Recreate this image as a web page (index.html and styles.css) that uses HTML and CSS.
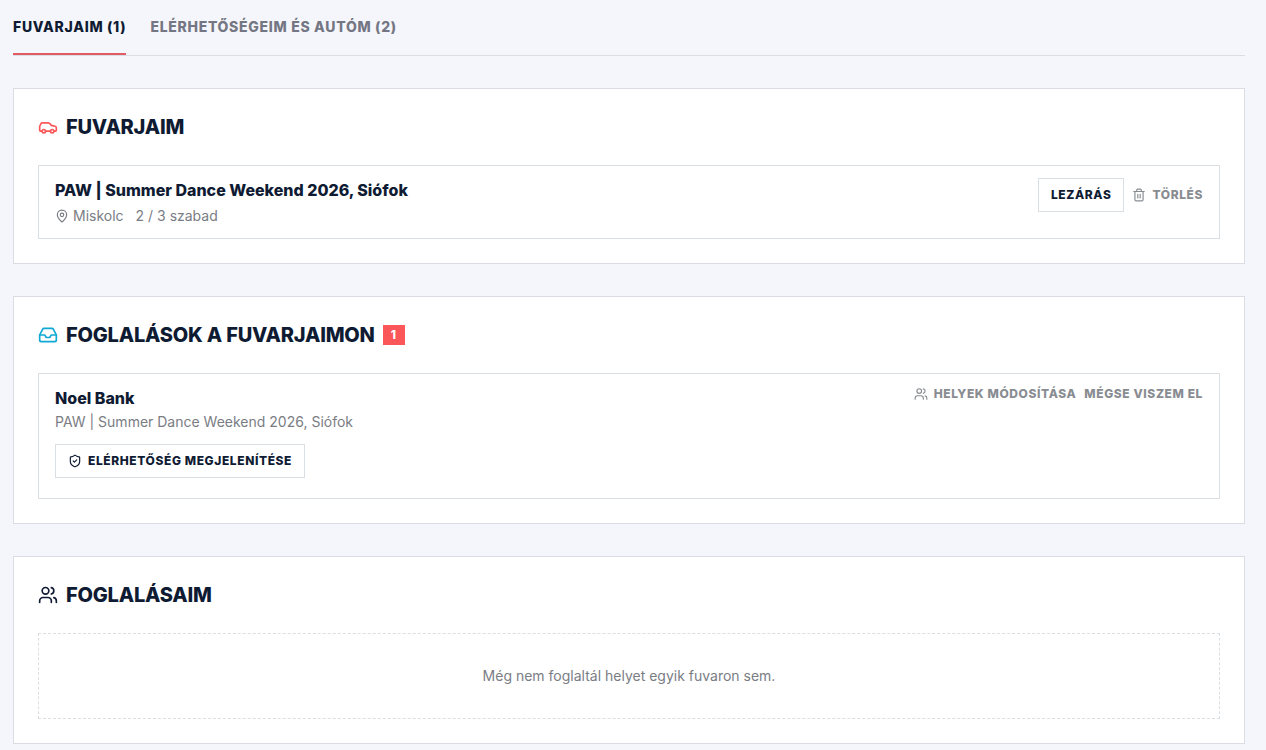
FILE: index.html
```html
<!DOCTYPE html>
<html lang="hu">

<head>
  <meta charset="UTF-8">
  <meta name="viewport" content="width=device-width, initial-scale=1.0">
  <title>Fuvarjaim</title>
  <link rel="stylesheet" href="styles.css">
</head>

<body>
  <nav class="tabs">
    <a href="#fuvarjaim" class="tab active">Fuvarjaim (1)</a>
    <a href="#elerhetosegeim" class="tab">Elérhetőségeim és autóm (2)</a>
  </nav>

  <main class="sections">
    <section class="card" id="fuvarjaim">
      <h2>
        <svg class="icon icon-red" viewBox="0 0 24 24"><path d="M19 17h2c.6 0 1-.4 1-1v-3c0-.9-.7-1.7-1.5-1.9C18.7 10.6 16 10 16 10s-1.3-1.4-2.2-2.3c-.5-.4-1.1-.7-1.8-.7H5c-.6 0-1.1.4-1.4.9l-1.4 2.9A3.7 3.7 0 0 0 2 12v4c0 .6.4 1 1 1h2"/><circle cx="7" cy="17" r="2"/><path d="M9 17h6"/><circle cx="17" cy="17" r="2"/></svg>
        Fuvarjaim
      </h2>
      <div class="item">
        <div class="item-info">
          <h3>PAW | Summer Dance Weekend 2026, Siófok</h3>
          <div class="meta">
            <span class="place">
              <svg class="icon icon-small" viewBox="0 0 24 24"><path d="M20 10c0 5-5.5 10.2-7.4 11.8a1 1 0 0 1-1.2 0C9.5 20.2 4 15 4 10a8 8 0 0 1 16 0"/><circle cx="12" cy="10" r="3"/></svg>
              Miskolc
            </span>
            <span>2 / 3 szabad</span>
          </div>
        </div>
        <div class="actions">
          <button type="button" class="btn">Lezárás</button>
          <button type="button" class="btn-text">
            <svg class="icon icon-small" viewBox="0 0 24 24"><path d="M3 6h18M19 6v14c0 1-1 2-2 2H7c-1 0-2-1-2-2V6M8 6V4c0-1 1-2 2-2h4c1 0 2 1 2 2v2M10 11v6M14 11v6"/></svg>
            Törlés
          </button>
        </div>
      </div>
    </section>

    <section class="card">
      <h2>
        <svg class="icon icon-blue" viewBox="0 0 24 24"><path d="M22 12h-6l-2 3h-4l-2-3H2"/><path d="M5.45 5.11 2 12v6a2 2 0 0 0 2 2h16a2 2 0 0 0 2-2v-6l-3.45-6.89A2 2 0 0 0 16.76 4H7.24a2 2 0 0 0-1.79 1.11z"/></svg>
        Foglalások a fuvarjaimon
        <span class="badge">1</span>
      </h2>
      <div class="item booking">
        <div class="item-info">
          <h3>Noel Bank</h3>
          <p class="event">PAW | Summer Dance Weekend 2026, Siófok</p>
          <button type="button" class="btn">
            <svg class="icon icon-small" viewBox="0 0 24 24"><path d="M20 13c0 5-3.5 7.5-7.66 8.95a1 1 0 0 1-.67-.01C7.5 20.5 4 18 4 13V6a1 1 0 0 1 1-1c2 0 4.5-1.2 6.24-2.72a1.17 1.17 0 0 1 1.52 0C14.51 3.81 17 5 19 5a1 1 0 0 1 1 1z"/><path d="m9 12 2 2 4-4"/></svg>
            Elérhetőség megjelenítése
          </button>
        </div>
        <div class="actions">
          <button type="button" class="btn-text">
            <svg class="icon icon-small" viewBox="0 0 24 24"><path d="M16 21v-2a4 4 0 0 0-4-4H6a4 4 0 0 0-4 4v2"/><circle cx="9" cy="7" r="4"/><path d="M22 21v-2a4 4 0 0 0-3-3.87M16 3.13a4 4 0 0 1 0 7.75"/></svg>
            Helyek módosítása
          </button>
          <button type="button" class="btn-text">Mégse viszem el</button>
        </div>
      </div>
    </section>

    <section class="card">
      <h2>
        <svg class="icon" viewBox="0 0 24 24"><path d="M16 21v-2a4 4 0 0 0-4-4H6a4 4 0 0 0-4 4v2"/><circle cx="9" cy="7" r="4"/><path d="M22 21v-2a4 4 0 0 0-3-3.87M16 3.13a4 4 0 0 1 0 7.75"/></svg>
        Foglalásaim
      </h2>
      <p class="empty">Még nem foglaltál helyet egyik fuvaron sem.</p>
    </section>
  </main>
</body>

</html>
```
FILE: styles.css
```css
* {
  box-sizing: border-box;
}

body {
  font-family: Inter, 'Liberation Sans', sans-serif;
  font-size: 14px;
  line-height: 20px;
  color: #0f1b33;
  background: #f5f6fb;
  margin: 0;
  padding: 0 21px 6px 13px;
}

h2, h3, p {
  margin: 0;
}

.tabs {
  display: flex;
  gap: 24px;
  border-bottom: 1px solid #dadde5;
}

.tab {
  padding: 17px 0 16px;
  border-bottom: 2px solid transparent;
  color: #747783;
  font-weight: 800;
  letter-spacing: 0.05em;
  text-transform: uppercase;
  text-decoration: none;
}

.tab.active {
  color: #0f1b33;
  border-color: #e05c62;
}

.sections {
  display: grid;
  gap: 32px;
  margin-top: 32px;
}

.card {
  background: #fff;
  border: 1px solid #dadde5;
  padding: 24px;
}

h2 {
  display: flex;
  align-items: center;
  gap: 8px;
  margin-bottom: 24px;
  font-size: 20px;
  line-height: 28px;
  font-weight: 800;
  letter-spacing: -0.01em;
  text-transform: uppercase;
}

.icon {
  width: 20px;
  height: 20px;
  flex-shrink: 0;
  fill: none;
  stroke: currentColor;
  stroke-width: 2;
  stroke-linecap: round;
  stroke-linejoin: round;
}

.icon-small {
  width: 14px;
  height: 14px;
}

.icon-red {
  color: #fb5658;
}

.icon-blue {
  color: #0fa9d6;
}

.badge {
  padding: 0 8px;
  background: #fb5658;
  color: #fff;
  font-size: 12px;
  line-height: 20px;
  letter-spacing: 0.05em;
}

.item {
  display: flex;
  justify-content: space-between;
  align-items: flex-start;
  gap: 16px;
  padding: 12px 16px;
  border: 1px solid #dadfe3;
}

.booking {
  padding-bottom: 20px;
}

h3 {
  font-size: 16px;
  line-height: 24px;
  font-weight: 800;
}

.meta {
  display: flex;
  gap: 12px;
  margin-top: 4px;
  color: #7a7d84;
}

.place {
  display: flex;
  align-items: center;
  gap: 4px;
}

.event {
  margin: 2px 0 12px;
  color: #7a7d84;
}

.actions {
  display: flex;
  align-items: center;
  gap: 8px;
}

.btn, .btn-text {
  display: flex;
  align-items: center;
  gap: 6px;
  padding: 0;
  border: none;
  background: none;
  color: #888c91;
  font-family: inherit;
  font-size: 12px;
  line-height: 16px;
  font-weight: 800;
  letter-spacing: 0.05em;
  text-transform: uppercase;
  cursor: pointer;
}

.btn {
  padding: 8px 12px;
  border: 1px solid #dadfe3;
  background: #fff;
  color: #0f1b33;
}

.empty {
  padding: 32px;
  border: 1px dashed #dadfe3;
  color: #7a7d84;
  text-align: center;
}
```
